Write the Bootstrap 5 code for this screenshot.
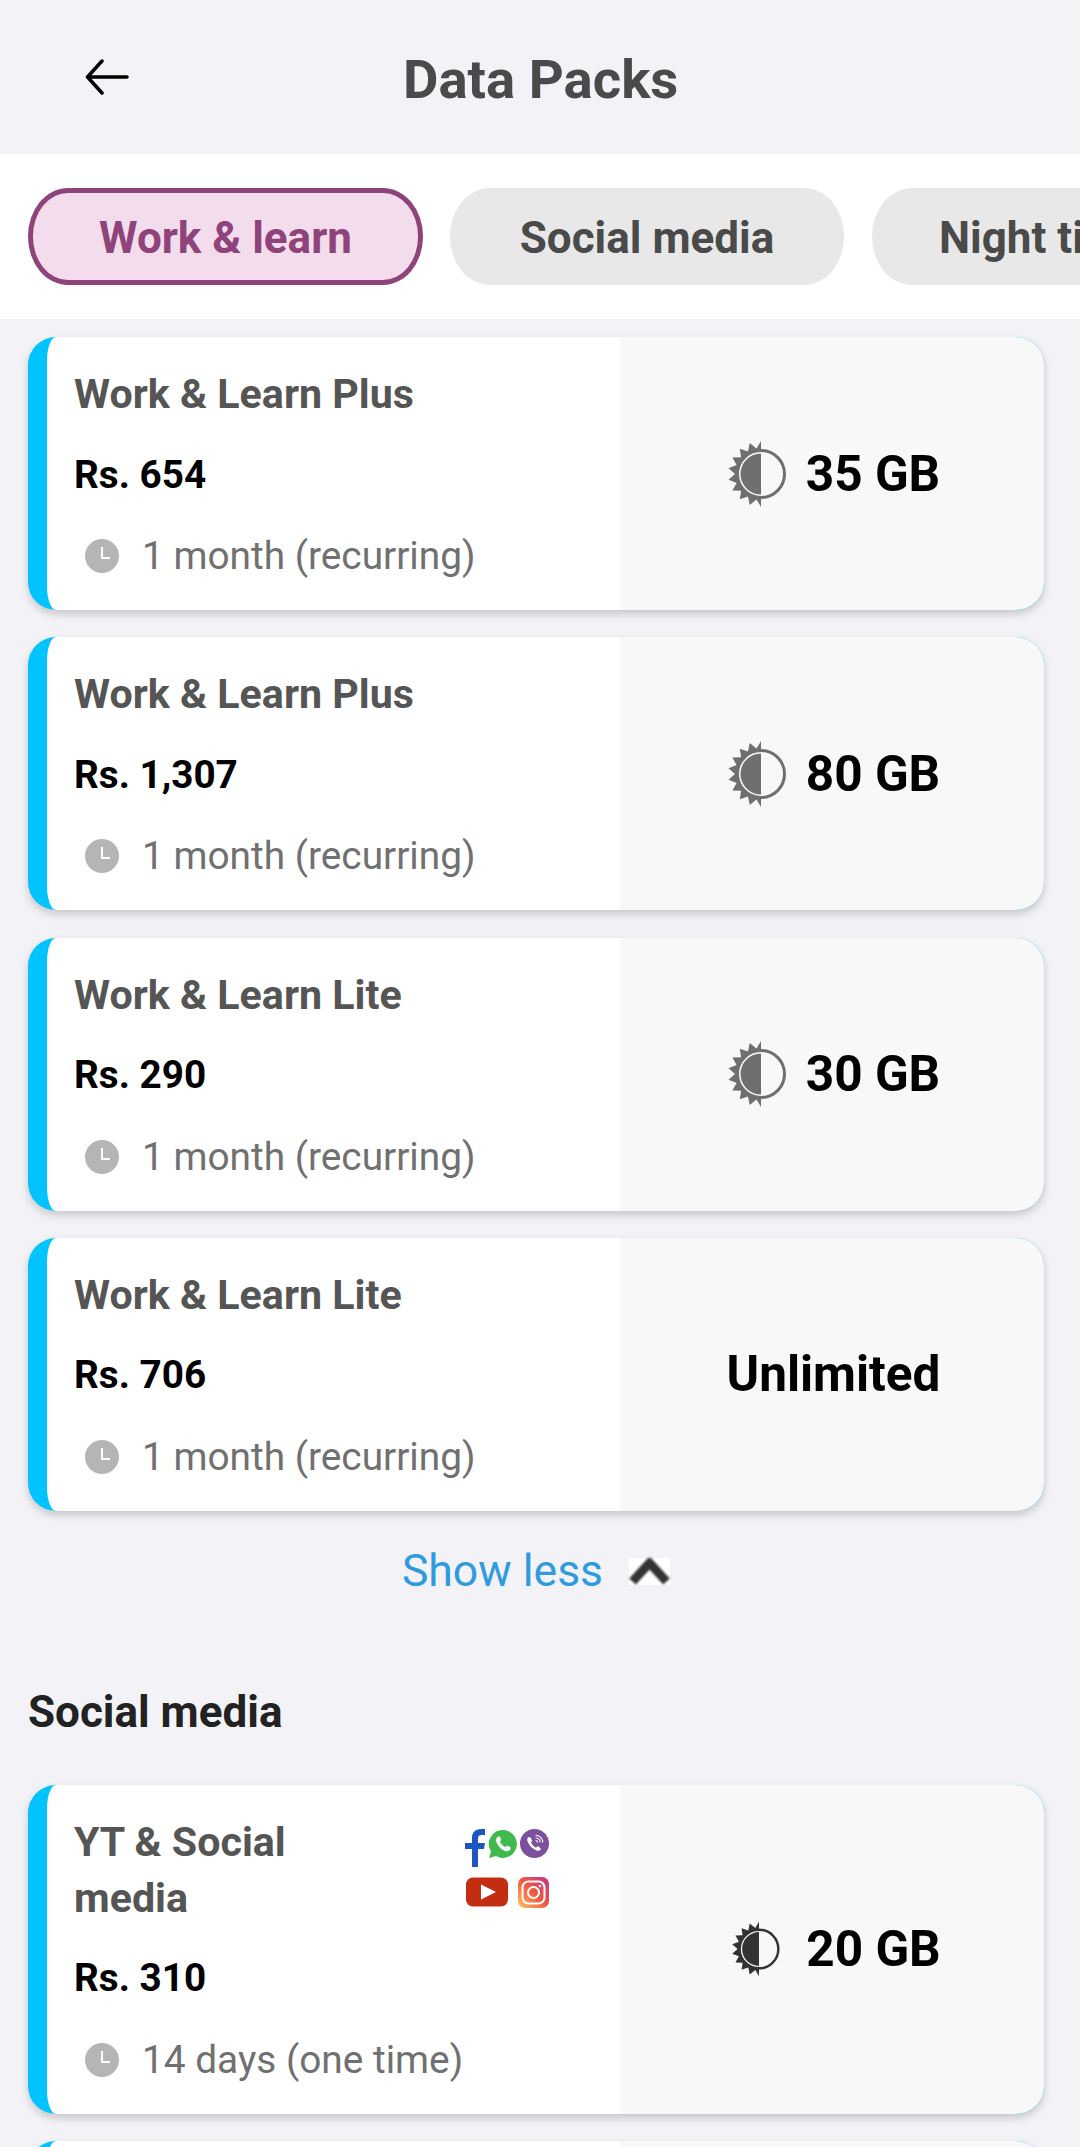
<!DOCTYPE html>
<html lang="en">
<head>
<meta charset="utf-8">
<title>Data Packs</title>
<link href="https://cdn.jsdelivr.net/npm/bootstrap@5.3.0/dist/css/bootstrap.min.css" rel="stylesheet">
<style>
html,body{height:2147px;overflow:hidden}
body{background:#f2f2f7;font-family:Roboto,"Liberation Sans",sans-serif}
.topbar{height:154px;padding-left:85px}
.topbar svg{width:44px;height:36px;flex:none}
.page-title{font-size:54.5px;font-weight:700;color:#4a4a4a;margin:4px 0 0 274px;line-height:60px}
.tabband{height:165px;background:#fff;padding:34px 0 0 28px;gap:28px}
.tabpill{flex:none;width:394px;height:97px;border-radius:40px/48px;background:#e8e8e8;color:#4a4a4a;font-size:44px;font-weight:700;line-height:100px;text-align:center;white-space:nowrap}
.tabpill-on{background:#f3dcec;color:#8f437b;border:5px solid #8f437b;line-height:90px;width:395px;margin-right:-1px}
.tabpill-cut{text-align:left;padding-left:67px;width:400px}
.packlist{padding:18px 36px 0 28px}
.packcard{background:#00c3ff;border-radius:28px;box-shadow:0 4px 8px rgba(0,0,0,.18);margin-bottom:27.3px;overflow:hidden}
.packstub{height:60px}
.packinfo{flex:0 0 573px;margin-left:19px;background:#fff;border-radius:9px 0 0 9px/24px 0 0 24px;padding:29px 0 27px 27px}
.packname{font-size:41.2px;font-weight:700;color:#555;line-height:56px}
.packrow{margin-bottom:24.5px}
.packprice{font-size:38.7px;font-weight:700;color:#000;line-height:56px;margin-bottom:24.5px}
.packdur{font-size:38.8px;color:#707070;line-height:58px;margin-bottom:-2px;padding-left:11px;gap:23px}
.clockico{width:34px;height:34px;flex:none}
.packvol{flex:1 1 auto;background:#f8f8f9;font-size:49.5px;font-weight:700;color:#000;line-height:56px;gap:11px;padding-left:3px}
.sunico{width:68px;height:68px;flex:none;color:#6f6f6f}
.sunico-dark{width:56px;height:56px;color:#333;margin:0 8px 0 5px}
.sunfill{fill:#f8f8f9}
.lesslink{color:#2f9bdf;font-size:44.5px;line-height:56px;padding-top:5px;gap:26px;text-decoration:none}
.lesschev{width:41px;height:27px;flex:none;background:#fff}
.lesschev svg{display:block;width:41px;height:27px;filter:blur(1px)}
.sechead{font-size:44px;font-weight:700;color:#222;line-height:56px;margin:85px 0 44.6px}
.namecol{width:260px}
.socialgrid{width:85px;margin:15px 0 0 130px;gap:10px}
.socialline{gap:2px;justify-content:flex-end}
.socialline svg{display:block;flex:none}
</style>
</head>
<body>
<svg width="0" height="0" class="d-block" aria-hidden="true">
<defs>
<symbol id="sun" viewBox="-34 -34 68 68">
<path fill="currentColor" d="M0-33L-4.500-25.600-11.300-31-13-22.500-21.200-25.300-19.900-16.700-28.600-16.500-24.400-8.900-32.500-5.700-26 0-32.500 5.700-24.400 8.900-28.600 16.500-19.900 16.700-21.200 25.300-13 22.500-11.300 31-4.500 25.600 0 33Z"/>
<circle class="sunfill" r="23.500" stroke="currentColor" stroke-width="3"/>
<path fill="currentColor" d="M0-20.500A20.500 20.500 0 0 0 0 20.500Z"/>
</symbol>
<symbol id="clock" viewBox="0 0 34 34">
<circle cx="17" cy="17" r="17" fill="#b5b5b5"/>
<path d="M17 8V19H25" fill="none" stroke="#fff" stroke-width="2"/>
</symbol>
<linearGradient id="igrad" x1="0" y1="1" x2="1" y2="0">
<stop offset="0" stop-color="#fdc468"/><stop offset=".5" stop-color="#f0593f"/><stop offset="1" stop-color="#c2338f"/>
</linearGradient>
</defs>
</svg>

<header class="topbar d-flex align-items-center">
<svg viewBox="0 0 44 36" aria-hidden="true"><path d="M42 18H3M17 2L2.500 18 17 34" fill="none" stroke="#000" stroke-width="3.500" stroke-linecap="round" stroke-linejoin="round"/></svg>
<h1 class="page-title">Data Packs</h1>
</header>

<nav class="tabband d-flex overflow-hidden">
<div class="tabpill tabpill-on">Work &amp; learn</div>
<div class="tabpill">Social media</div>
<div class="tabpill tabpill-cut">Night time</div>
</nav>

<main class="packlist">

<div class="packcard d-flex">
<div class="packinfo">
<div class="packname packrow">Work &amp; Learn Plus</div>
<div class="packprice">Rs. 654</div>
<div class="packdur d-flex align-items-center"><svg class="clockico"><use href="#clock"/></svg>1 month (recurring)</div>
</div>
<div class="packvol d-flex align-items-center justify-content-center"><svg class="sunico"><use href="#sun"/></svg>35 GB</div>
</div>

<div class="packcard d-flex">
<div class="packinfo">
<div class="packname packrow">Work &amp; Learn Plus</div>
<div class="packprice">Rs. 1,307</div>
<div class="packdur d-flex align-items-center"><svg class="clockico"><use href="#clock"/></svg>1 month (recurring)</div>
</div>
<div class="packvol d-flex align-items-center justify-content-center"><svg class="sunico"><use href="#sun"/></svg>80 GB</div>
</div>

<div class="packcard d-flex">
<div class="packinfo">
<div class="packname packrow">Work &amp; Learn Lite</div>
<div class="packprice">Rs. 290</div>
<div class="packdur d-flex align-items-center"><svg class="clockico"><use href="#clock"/></svg>1 month (recurring)</div>
</div>
<div class="packvol d-flex align-items-center justify-content-center"><svg class="sunico"><use href="#sun"/></svg>30 GB</div>
</div>

<div class="packcard d-flex">
<div class="packinfo">
<div class="packname packrow">Work &amp; Learn Lite</div>
<div class="packprice">Rs. 706</div>
<div class="packdur d-flex align-items-center"><svg class="clockico"><use href="#clock"/></svg>1 month (recurring)</div>
</div>
<div class="packvol d-flex align-items-center justify-content-center">Unlimited</div>
</div>

<a class="lesslink d-flex align-items-center justify-content-center" href="#">Show less
<span class="lesschev"><svg viewBox="0 0 41 27" aria-hidden="true"><path d="M3.500 23.500L20.500 5 37.500 23.500" fill="none" stroke="#333" stroke-width="9" stroke-linejoin="miter"/></svg></span></a>

<h2 class="sechead">Social media</h2>

<div class="packcard d-flex">
<div class="packinfo">
<div class="d-flex align-items-start packrow">
<div class="packname namecol">YT &amp; Social media</div>
<div class="socialgrid d-flex flex-column">
<div class="socialline d-flex align-items-start">
<svg width="22" height="38" viewBox="0 0 22 38" aria-hidden="true"><path fill="#1d56c0" d="M8 38V20H1V14H8V9C8 3 12 0 17 0H21V6H18C15 6 14 7 14 10V14H21L20 20H14V38Z"/></svg>
<svg width="30" height="30" viewBox="0 0 28 28" aria-hidden="true"><path fill="#40b94f" d="M14 1A13 13 0 1 1 7.500 25.300L1 27 2.800 21A13 13 0 0 1 14 1Z"/><path fill="#fff" d="M9.500 7C8 8 7 10 8 12.500 9.500 16 12 19 16 20.500 18.500 21.500 20.500 20 21 18.500L21 17 17.800 15.400 16.300 17C14 16 12 14 11 11.700L12.500 10.200 11 7Z"/></svg>
<svg width="29" height="29" viewBox="0 0 28 28" aria-hidden="true"><circle cx="14" cy="14" r="14" fill="#7b519d"/><path fill="#fff" d="M8 8C7 9 6.500 10.500 7.500 12.500 9 16 12 19 15.500 20.500 17.500 21.500 19 21 20 20L20 18.500 17 16.500 15.500 18C13.500 17 11.500 15 10.500 13L12 11.500 10 8Z"/><path fill="none" stroke="#fff" d="M15 6A7 7 0 0 1 22 13M15 8.500A4.500 4.500 0 0 1 19.500 13M15 11A2 2 0 0 1 17 13"/></svg>
</div>
<div class="socialline d-flex align-items-center">
<svg width="42" height="30" viewBox="0 0 42 29" aria-hidden="true"><rect width="42" height="29" rx="7" fill="#c32e13"/><path fill="#fff" d="M15 7L30 14.500 15 22Z"/></svg>
<svg class="ms-2" width="31" height="31" viewBox="0 0 31 31" aria-hidden="true"><rect width="31" height="31" rx="7" fill="url(#igrad)"/><rect x="4.500" y="4.500" width="22" height="22" rx="6" fill="none" stroke="#fff" stroke-width="2"/><circle cx="15.500" cy="15.500" r="5.500" fill="none" stroke="#fff" stroke-width="2"/><circle cx="22" cy="9" r="1.300" fill="#fff"/></svg>
</div>
</div>
</div>
<div class="packprice">Rs. 310</div>
<div class="packdur d-flex align-items-center"><svg class="clockico"><use href="#clock"/></svg>14 days (one time)</div>
</div>
<div class="packvol d-flex align-items-center justify-content-center"><svg class="sunico sunico-dark"><use href="#sun"/></svg>20 GB</div>
</div>

<div class="packcard packstub d-flex">
<div class="packinfo"></div>
<div class="packvol"></div>
</div>

</main>
<script src="https://cdn.jsdelivr.net/npm/bootstrap@5.3.0/dist/js/bootstrap.bundle.min.js"></script>
</body>
</html>
